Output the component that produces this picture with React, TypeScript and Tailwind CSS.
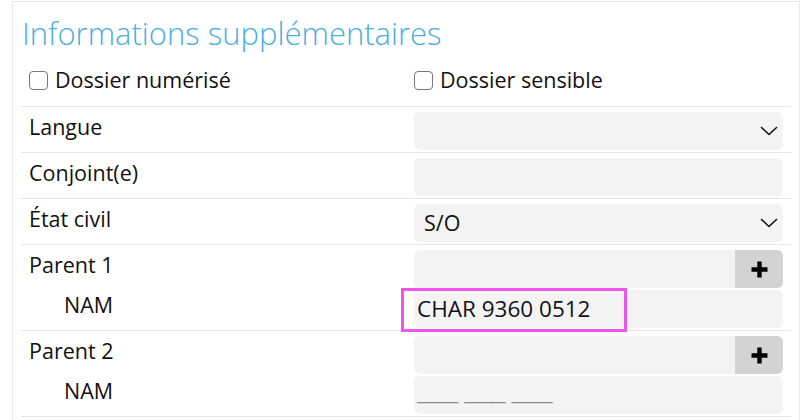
import React from "react"

const font = { fontFamily: '"Open Sans", "Noto Sans", sans-serif' }

function Chevron() {
  return (
    <svg width="18" height="10" viewBox="0 0 18 10" fill="none" className="shrink-0">
      <path d="M1.5 1.5 L9 8.5 L16.5 1.5" stroke="#111" strokeWidth="1.6" strokeLinecap="round" strokeLinejoin="round" />
    </svg>
  )
}

function Plus() {
  return (
    <svg width="19" height="19" viewBox="0 0 19 19">
      <path d="M9.5 1.5 V17.5 M1.5 9.5 H17.5" stroke="#000" strokeWidth="4.4" />
    </svg>
  )
}

function Field({ children, className = "" }: { children?: React.ReactNode; className?: string }) {
  return (
    <div className={`h-[38px] rounded-[6px] bg-[#f3f3f3] flex items-center ${className}`}>{children}</div>
  )
}

function SelectField({ value }: { value?: string }) {
  return (
    <Field className="pl-[10px] pr-[5px] justify-between">
      <span className="text-[21.5px] text-[#111]">{value}</span>
      <Chevron />
    </Field>
  )
}

function AddField() {
  return (
    <Field className="overflow-hidden justify-end">
      <div className="w-[48px] h-full bg-[#d3d3d3] flex items-center justify-center">
        <Plus />
      </div>
    </Field>
  )
}

function Row({ label, children }: { label: string; children: React.ReactNode }) {
  return (
    <div className="grid grid-cols-2 border-t border-[#e6e6e6] pt-[5px] pb-[2px]">
      <div className="pl-[8px] text-[21.5px] leading-[30px] text-[#111]">{label}</div>
      <div className="px-[8px]">{children}</div>
    </div>
  )
}

function ParentRow({ label, nam }: { label: string; nam?: string }) {
  return (
    <div className="grid grid-cols-2 border-t border-[#e6e6e6] pt-[5px] pb-[2px]">
      <div className="pl-[8px] text-[21.5px] text-[#111] flex flex-col gap-[2px]">
        <div className="h-[38px] leading-[30px]">{label}</div>
        <div className="h-[38px] leading-[30px] pl-[35px]">NAM</div>
      </div>
      <div className="px-[8px] flex flex-col gap-[2px]">
        <AddField />
        {nam ? (
          <div className="relative">
            <Field className="pl-[3px]">
              <span className="text-[22.5px] text-[#111]">{nam}</span>
            </Field>
            <div className="absolute left-[-13px] top-[-2px] w-[226px] h-[44px] border-[3px] border-[#ee55ee]" />
          </div>
        ) : (
          <Field className="pl-[3px] items-end pb-[13px]">
            <span className="text-[23.5px] leading-[20px] text-[#8a8a8a]">____ ____ ____</span>
          </Field>
        )}
      </div>
    </div>
  )
}

function Check({ label }: { label: string }) {
  return (
    <label className="flex items-center gap-[7px] pl-[8px] text-[21.5px] text-[#111]">
      <span className="w-[19px] h-[19px] rounded-[4px] border-[1.5px] border-[#777] bg-white" />
      <span>{label}</span>
    </label>
  )
}

export default function App() {
  return (
    <div className="w-[810px] h-[420px] bg-white overflow-hidden" style={font}>
      <div className="ml-[12px] mt-[1px] w-[788px] border border-[#e8e8e8] px-[8px] pb-[10px]">
        <h2 className="pl-[1px] pt-[7px] text-[31px] leading-[48px] font-light text-[#4aaede]">
          Informations supplémentaires
        </h2>
        <div className="grid grid-cols-2 h-[49px] items-center pb-[2px]">
          <Check label="Dossier numérisé" />
          <Check label="Dossier sensible" />
        </div>
        <Row label="Langue">
          <SelectField />
        </Row>
        <Row label="Conjoint(e)">
          <Field />
        </Row>
        <Row label="État civil">
          <SelectField value="S/O" />
        </Row>
        <ParentRow label="Parent 1" nam="CHAR 9360 0512" />
        <ParentRow label="Parent 2" />
        <div className="border-t border-[#e6e6e6]" />
      </div>
    </div>
  )
}
